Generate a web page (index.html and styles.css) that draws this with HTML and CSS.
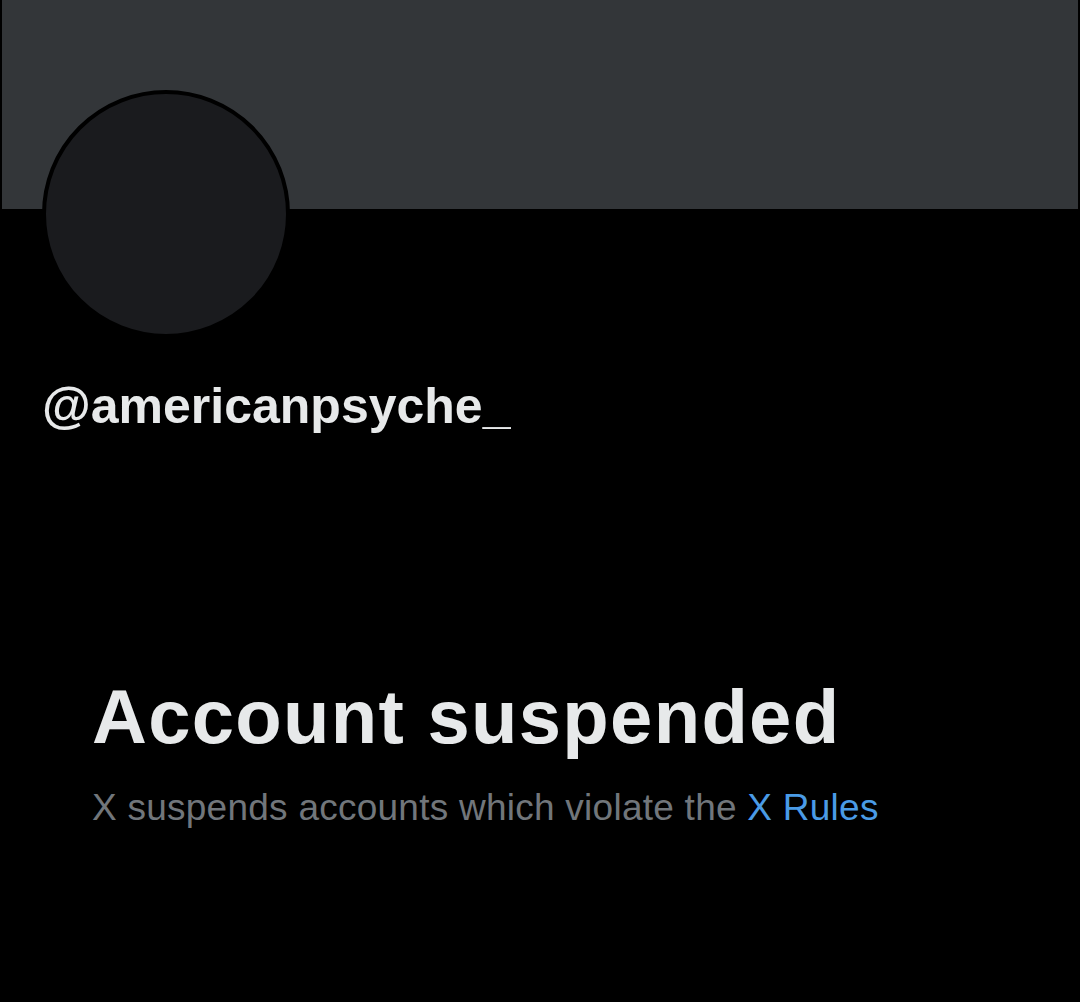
FILE: index.html
```html
<!DOCTYPE html>
<html>
    <head>
        <meta charset="utf-8">
        <title>@americanpsyche_ / X</title>
        <link rel="stylesheet" href="styles.css">
    </head>
    <body>
        <!-- 头图 -->
        <div class="banner"></div>
        <!-- 头像 -->
        <div class="profile">
            <div class="avatar"></div>
            <div class="handle">@americanpsyche_</div>
        </div>
        <!-- 封禁提示 -->
        <div class="notice">
            <h1 class="notice-title">Account suspended</h1>
            <p class="notice-text">X suspends accounts which violate the <a href="javascript:void(0);">X Rules</a></p>
        </div>
    </body>
</html>
```
FILE: styles.css
```css
*{
    margin: 0;
    padding: 0;
}
html,body{
    background-color: #000;
}
body{
    width: 1080px;
    height: 1002px;
    overflow: hidden;
    font-family: "Liberation Sans", Arial, sans-serif;
}
a{
    text-decoration: none;
    color: #4a9be6;
}
.banner{
    height: 209px;
    margin: 0 2px;
    background-color: #333639;
}
.profile{
    padding-left: 42px;
}
.avatar{
    width: 240px;
    height: 240px;
    margin-top: -119px;
    border: 4px solid #000;
    border-radius: 50%;
    background-color: #1a1b1e;
}
.handle{
    margin-top: 38px;
    font-size: 50px;
    font-weight: bold;
    line-height: 60px;
    color: #e7e9ea;
}
.notice{
    padding: 238px 0 0 92px;
}
.notice-title{
    font-size: 76px;
    font-weight: bold;
    line-height: 86px;
    letter-spacing: 1.3px;
    color: #e7e9ea;
}
.notice-text{
    margin-top: 26px;
    font-size: 37px;
    line-height: 44px;
    letter-spacing: 0.25px;
    color: #71767b;
}
```
